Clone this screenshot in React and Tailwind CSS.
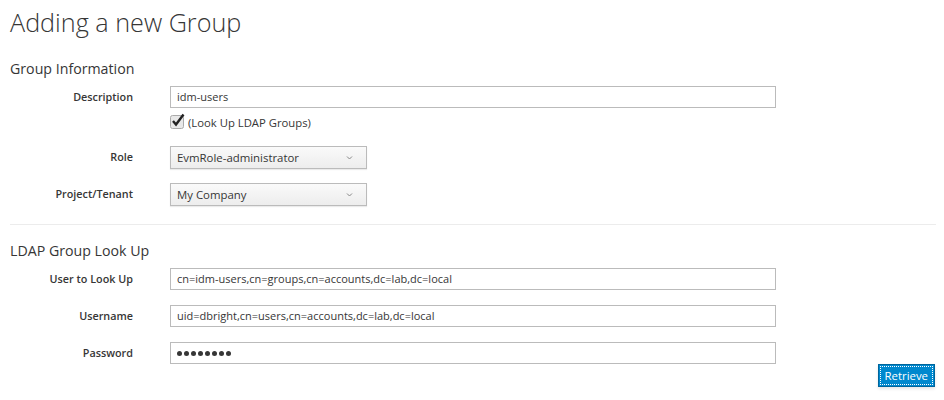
import React from "react";

function Chevron() {
  return (
    <svg width="7" height="5" viewBox="0 0 7 5" className="text-[#888]">
      <path d="M1 1.5l2.5 2.5 2.5-2.5" fill="none" stroke="currentColor" strokeWidth="1" />
    </svg>
  );
}

function Row({ label, children, className = "" }) {
  return (
    <div className={"flex items-start " + className}>
      <div className="w-[123px] text-right text-[10.8px] font-semibold leading-[22px] text-[#363636]">{label}</div>
      <div className="ml-[37px]">{children}</div>
    </div>
  );
}

function TextBox({ value }) {
  return (
    <div className="w-[606px] h-[22px] border border-[#bbbbbb] bg-white px-[6px] text-[11px] leading-[20px] text-[#363636]">
      {value}
    </div>
  );
}

function Select({ value }) {
  return (
    <div className="w-[197px] h-[23px] border border-[#bbbbbb] bg-gradient-to-b from-[#fafafa] to-[#ededed] pl-[6px] pr-[13px] flex items-center justify-between text-[11.4px] text-[#363636] shadow-[0_1px_1px_rgba(3,3,3,0.08)]">
      <span>{value}</span>
      <Chevron />
    </div>
  );
}

export default function App() {
  return (
    <div className="bg-white w-[944px] h-[400px] px-[10px] font-['Open_Sans',sans-serif] text-[#363636]">
      <h1 className="text-[25.2px] font-light leading-[28px] pt-[8px]">Adding a new Group</h1>
      <h3 className="text-[14.2px] leading-[18px] mt-[24px]">Group Information</h3>
      <Row label="Description" className="mt-[8px]">
        <TextBox value="idm-users" />
        <div className="flex items-end mt-[4px] h-[17px]">
          <svg width="16" height="16" viewBox="0 0 16 16">
            <rect x="0.5" y="2.5" width="13" height="13" rx="2" fill="#e8e8e8" stroke="#aaa" />
            <path d="M3 8l3 3.5 7.5-10" fill="none" stroke="#222" strokeWidth="2.4" />
          </svg>
          <span className="ml-[2px] text-[11.3px] leading-[13px] text-[#363636]">(Look Up LDAP Groups)</span>
        </div>
      </Row>
      <Row label="Role" className="mt-[17px]">
        <Select value="EvmRole-administrator" />
      </Row>
      <Row label="Project/Tenant" className="mt-[14px]">
        <Select value="My Company" />
      </Row>
      <div className="border-t border-[#ececec] mt-[18px] mr-[-2px]" />
      <h3 className="text-[14.2px] leading-[18px] mt-[17px]">LDAP Group Look Up</h3>
      <Row label="User to Look Up" className="mt-[8px]">
        <TextBox value="cn=idm-users,cn=groups,cn=accounts,dc=lab,dc=local" />
      </Row>
      <Row label="Username" className="mt-[15px]">
        <TextBox value="uid=dbright,cn=users,cn=accounts,dc=lab,dc=local" />
      </Row>
      <Row label="Password" className="mt-[15px]">
        <div className="w-[606px] h-[22px] border border-[#bbbbbb] bg-white px-[6px] flex items-center gap-[2px]">
          {Array.from({ length: 8 }).map((_, i) => (
            <span key={i} className="w-[5px] h-[5px] rounded-full bg-[#363636]" />
          ))}
        </div>
      </Row>
      <div className="flex justify-end mr-[-1px]">
        <button className="h-[23px] px-[1px] bg-[#0088ce] border border-[#00659c] text-white text-[11.4px] leading-none shadow-[0_2px_3px_rgba(3,3,3,0.1)]">
          <span className="inline-flex items-center h-[19px] px-[4px] border border-dotted border-white">Retrieve</span>
        </button>
      </div>
    </div>
  );
}
